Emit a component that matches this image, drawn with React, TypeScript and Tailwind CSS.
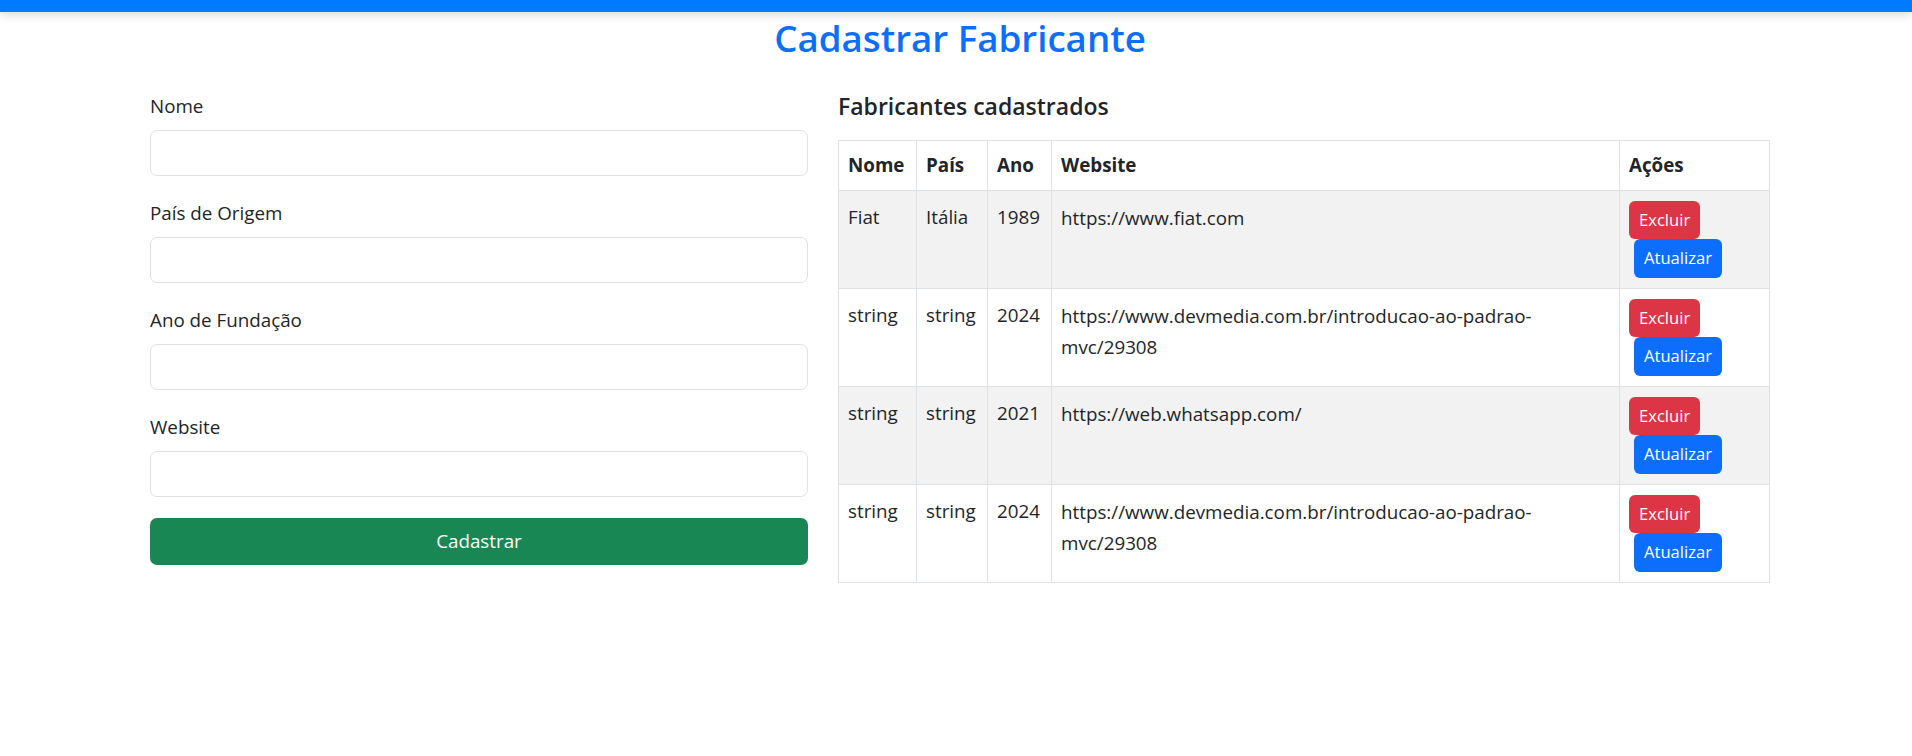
import React from "react";

const fabricantes = [
  { nome: "Fiat", pais: "Itália", ano: 1989, website: "https://www.fiat.com" },
  {
    nome: "string",
    pais: "string",
    ano: 2024,
    website: "https://www.devmedia.com.br/introducao-ao-padrao-mvc/29308",
  },
  { nome: "string", pais: "string", ano: 2021, website: "https://web.whatsapp.com/" },
  {
    nome: "string",
    pais: "string",
    ano: 2024,
    website: "https://www.devmedia.com.br/introducao-ao-padrao-mvc/29308",
  },
];

const campos = ["Nome", "País de Origem", "Ano de Fundação", "Website"];

function Campo({ label }: { label: string }) {
  return (
    <div className="mb-[23px]">
      <label className="block leading-[29px] mb-[9px]">{label}</label>
      <input
        type="text"
        className="block w-full h-[46px] px-[14px] rounded-[7px] border border-[#dee2e6] bg-white outline-none"
      />
    </div>
  );
}

export default function App() {
  return (
    <div
      className="min-h-screen bg-white text-[#212529] text-[18.8px]"
      style={{ fontFamily: '"Segoe UI", "Open Sans", "Noto Sans", sans-serif' }}
    >
      <div className="h-[12px] bg-[#007bff] shadow-[0_3px_10px_rgba(0,0,0,0.15)]" />
      <h2 className="mt-[3px] pl-[8px] text-center text-[36.7px] leading-[46px] font-semibold text-[#0d6efd]">
        Cadastrar Fabricante
      </h2>

      <div className="flex pl-[150px] pt-[31px]">
        {/* formulário */}
        <form className="w-[658px]" onSubmit={(e) => e.preventDefault()}>
          {campos.map((c) => (
            <Campo key={c} label={c} />
          ))}
          <button
            type="submit"
            className="-mt-[2px] w-full h-[47px] rounded-[7px] bg-[#198754] text-white"
          >
            Cadastrar
          </button>
        </form>

        {/* lista */}
        <div className="ml-[30px] w-[931px]">
          <h5 className="text-[23px] leading-[29px] font-semibold mb-[19px]">
            Fabricantes cadastrados
          </h5>
          <table className="w-full table-fixed border-collapse border border-[#dee2e6]">
            <colgroup>
              <col className="w-[78px]" />
              <col className="w-[71px]" />
              <col className="w-[64px]" />
              <col className="w-[568px]" />
              <col className="w-[150px]" />
            </colgroup>
            <thead>
              <tr className="align-bottom">
                {["Nome", "País", "Ano", "Website", "Ações"].map((h) => (
                  <th
                    key={h}
                    className="border border-[#dee2e6] px-[9px] py-[10px] text-left font-bold leading-[29px]"
                  >
                    {h}
                  </th>
                ))}
              </tr>
            </thead>
            <tbody>
              {fabricantes.map((f, i) => (
                <tr key={i} className={i % 2 === 0 ? "bg-[#f2f2f2] align-top" : "bg-white align-top"}>
                  <td className="border border-[#dee2e6] px-[9px] pt-[12px] pb-[8px] leading-[29px]">{f.nome}</td>
                  <td className="border border-[#dee2e6] px-[9px] pt-[12px] pb-[8px] leading-[29px]">{f.pais}</td>
                  <td className="border border-[#dee2e6] px-[9px] pt-[12px] pb-[8px] leading-[29px]">{f.ano}</td>
                  <td className="border border-[#dee2e6] px-[9px] pt-[12px] pb-[8px] leading-[31px] break-words">
                    {f.website}
                  </td>
                  <td className="border border-[#dee2e6] px-[9px] py-[10px]">
                    <div className="flex flex-wrap">
                      <button className="h-[38px] px-[10px] rounded-[6px] bg-[#dc3545] text-white text-[16.6px]">
                        Excluir
                      </button>
                      <button className="ml-[5px] h-[39px] px-[10px] rounded-[6px] bg-[#0d6efd] text-white text-[16.6px]">
                        Atualizar
                      </button>
                    </div>
                  </td>
                </tr>
              ))}
            </tbody>
          </table>
        </div>
      </div>
    </div>
  );
}
